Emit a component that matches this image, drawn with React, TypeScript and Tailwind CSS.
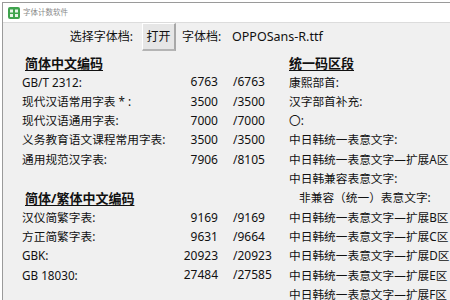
import React from "react";

type Row = {
  left?: { label: string; num: string; total: string } | { header: string };
  right?: { label: string; indent?: boolean } | { header: string };
};

const rows: Row[] = [
  { left: { header: "简体中文编码" }, right: { header: "统一码区段" } },
  { left: { label: "GB/T 2312:", num: "6763", total: "/6763" }, right: { label: "康熙部首:" } },
  { left: { label: "现代汉语常用字表 * :", num: "3500", total: "/3500" }, right: { label: "汉字部首补充:" } },
  { left: { label: "现代汉语通用字表:", num: "7000", total: "/7000" }, right: { label: "〇:" } },
  { left: { label: "义务教育语文课程常用字表:", num: "3500", total: "/3500" }, right: { label: "中日韩统一表意文字:" } },
  { left: { label: "通用规范汉字表:", num: "7906", total: "/8105" }, right: { label: "中日韩统一表意文字—扩展A区" } },
  { right: { label: "中日韩兼容表意文字:" } },
  { left: { header: "简体/繁体中文编码" }, right: { label: "非兼容（统一）表意文字:", indent: true } },
  { left: { label: "汉仪简繁字表:", num: "9169", total: "/9169" }, right: { label: "中日韩统一表意文字—扩展B区" } },
  { left: { label: "方正简繁字表:", num: "9631", total: "/9664" }, right: { label: "中日韩统一表意文字—扩展C区" } },
  { left: { label: "GBK:", num: "20923", total: "/20923" }, right: { label: "中日韩统一表意文字—扩展D区" } },
  { left: { label: "GB 18030:", num: "27484", total: "/27585" }, right: { label: "中日韩统一表意文字—扩展E区" } },
  { right: { label: "中日韩统一表意文字—扩展F区" } },
];

const font = { fontFamily: '"Noto Sans", "Noto Sans CJK SC", sans-serif' };

export default function App() {
  return (
    <div className="w-[450px] h-[300px] overflow-hidden bg-white relative" style={font}>
      <div className="absolute left-[2px] top-[2px] right-0 bottom-0 border-l border-t border-[#9a9a9a] flex flex-col">
        {/* title bar */}
        <div className="h-[20px] shrink-0 bg-white flex items-center pl-[5px] pt-[1px] gap-[3px] border-b border-[#dcdcdc]">
          <svg width="12" height="12" viewBox="0 0 12 12">
            <rect x="0" y="0" width="12" height="12" rx="2" fill="#3fa34d" />
            <rect x="2" y="2.5" width="3" height="3" fill="#e8f5e9" />
            <rect x="7" y="2.5" width="3" height="3" fill="#e8f5e9" />
            <rect x="2" y="7" width="3" height="3" fill="#e8f5e9" />
            <rect x="7" y="7" width="3" height="3" fill="#e8f5e9" />
          </svg>
          <span className="text-[7.5px] text-[#8a8a8a] leading-none">字体计数软件</span>
        </div>
        {/* content */}
        <div className="flex-1 bg-[#f0f0f0] text-[11.7px] text-[#111]">
          <div className="h-[28px] flex items-center">
            <div className="w-[130px] text-right text-[12px]">选择字体档:</div>
            <div className="ml-[9px] w-[34px] h-[28px] flex items-center justify-center text-[12px] bg-[#e6e6e6] border-l border-t border-b-2 border-r-2 border-l-white border-t-white border-r-[#a8a8a8] border-b-[#b4b4b4]">
              打开
            </div>
            <div className="ml-[6px] w-[50px] text-[12px]">字体档:</div>
            <div className="text-[12.5px]">OPPOSans-R.ttf</div>
          </div>
          <div className="mt-[2.5px] pl-[19px] grid grid-cols-[159px_37px_15px_56px_1fr] auto-rows-[19.3px] items-center leading-none whitespace-nowrap">
            {rows.map((r, i) => (
              <React.Fragment key={i}>
                {r.left && "header" in r.left ? (
                  <div className="col-span-2 pl-[3px] text-[13px] font-bold underline underline-offset-2 decoration-1">
                    {r.left.header}
                  </div>
                ) : r.left ? (
                  <>
                    <div>{r.left.label}</div>
                    <div className="text-right text-[12px]">{r.left.num}</div>
                  </>
                ) : (
                  <div className="col-span-2" />
                )}
                <div />
                <div className="text-[12px]">{r.left && "total" in r.left ? r.left.total : ""}</div>
                {r.right && "header" in r.right ? (
                  <div className="text-[13px] font-bold underline underline-offset-2 decoration-1">
                    {r.right.header}
                  </div>
                ) : (
                  <div className={r.right && r.right.indent ? "pl-[10px]" : ""}>{r.right?.label}</div>
                )}
              </React.Fragment>
            ))}
          </div>
        </div>
      </div>
    </div>
  );
}
